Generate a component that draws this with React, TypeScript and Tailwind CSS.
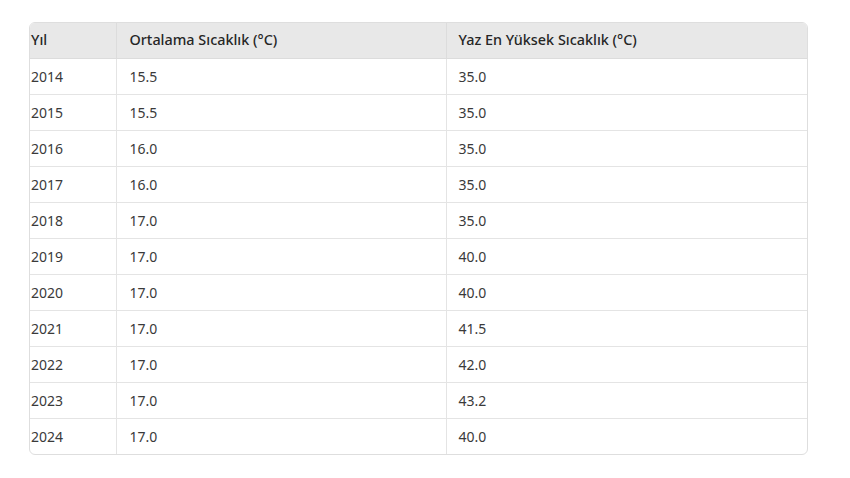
import React from "react";

const rows: [string, string, string][] = [
  ["2014", "15.5", "35.0"],
  ["2015", "15.5", "35.0"],
  ["2016", "16.0", "35.0"],
  ["2017", "16.0", "35.0"],
  ["2018", "17.0", "35.0"],
  ["2019", "17.0", "40.0"],
  ["2020", "17.0", "40.0"],
  ["2021", "17.0", "41.5"],
  ["2022", "17.0", "42.0"],
  ["2023", "17.0", "43.2"],
  ["2024", "17.0", "40.0"],
];

export default function App() {
  return (
    <div
      className="w-[850px] h-[478px] bg-white pt-[22px] pl-[29px]"
      style={{ fontFamily: '"Noto Sans", "Open Sans", sans-serif' }}
    >
      <div className="w-[779px] border border-[#dedede] rounded-[6px] overflow-hidden">
        <table className="w-full border-collapse table-fixed text-[14px] text-[#3a3a3a]">
          <colgroup>
            <col className="w-[86px]" />
            <col className="w-[330px]" />
            <col />
          </colgroup>
          <thead>
            <tr className="bg-[#e8e8e8] h-[35px] text-[14.4px]">
              <th className="text-left font-medium text-[#262626] pl-[1px] border-r border-[#dcdcdc] border-b">Yıl</th>
              <th className="text-left font-medium text-[#262626] pl-[13px] border-r border-[#dcdcdc] border-b">Ortalama Sıcaklık (°C)</th>
              <th className="text-left font-medium text-[#262626] pl-[12px] border-b border-[#dcdcdc]">Yaz En Yüksek Sıcaklık (°C)</th>
            </tr>
          </thead>
          <tbody>
            {rows.map((r, i) => (
              <tr key={r[0]} className={`h-[36px] ${i < rows.length - 1 ? "border-b border-[#e4e4e4]" : ""}`}>
                <td className="pl-[1px] border-r border-[#e4e4e4]">{r[0]}</td>
                <td className="pl-[13px] border-r border-[#e4e4e4]">{r[1]}</td>
                <td className="pl-[12px]">{r[2]}</td>
              </tr>
            ))}
          </tbody>
        </table>
      </div>
    </div>
  );
}
